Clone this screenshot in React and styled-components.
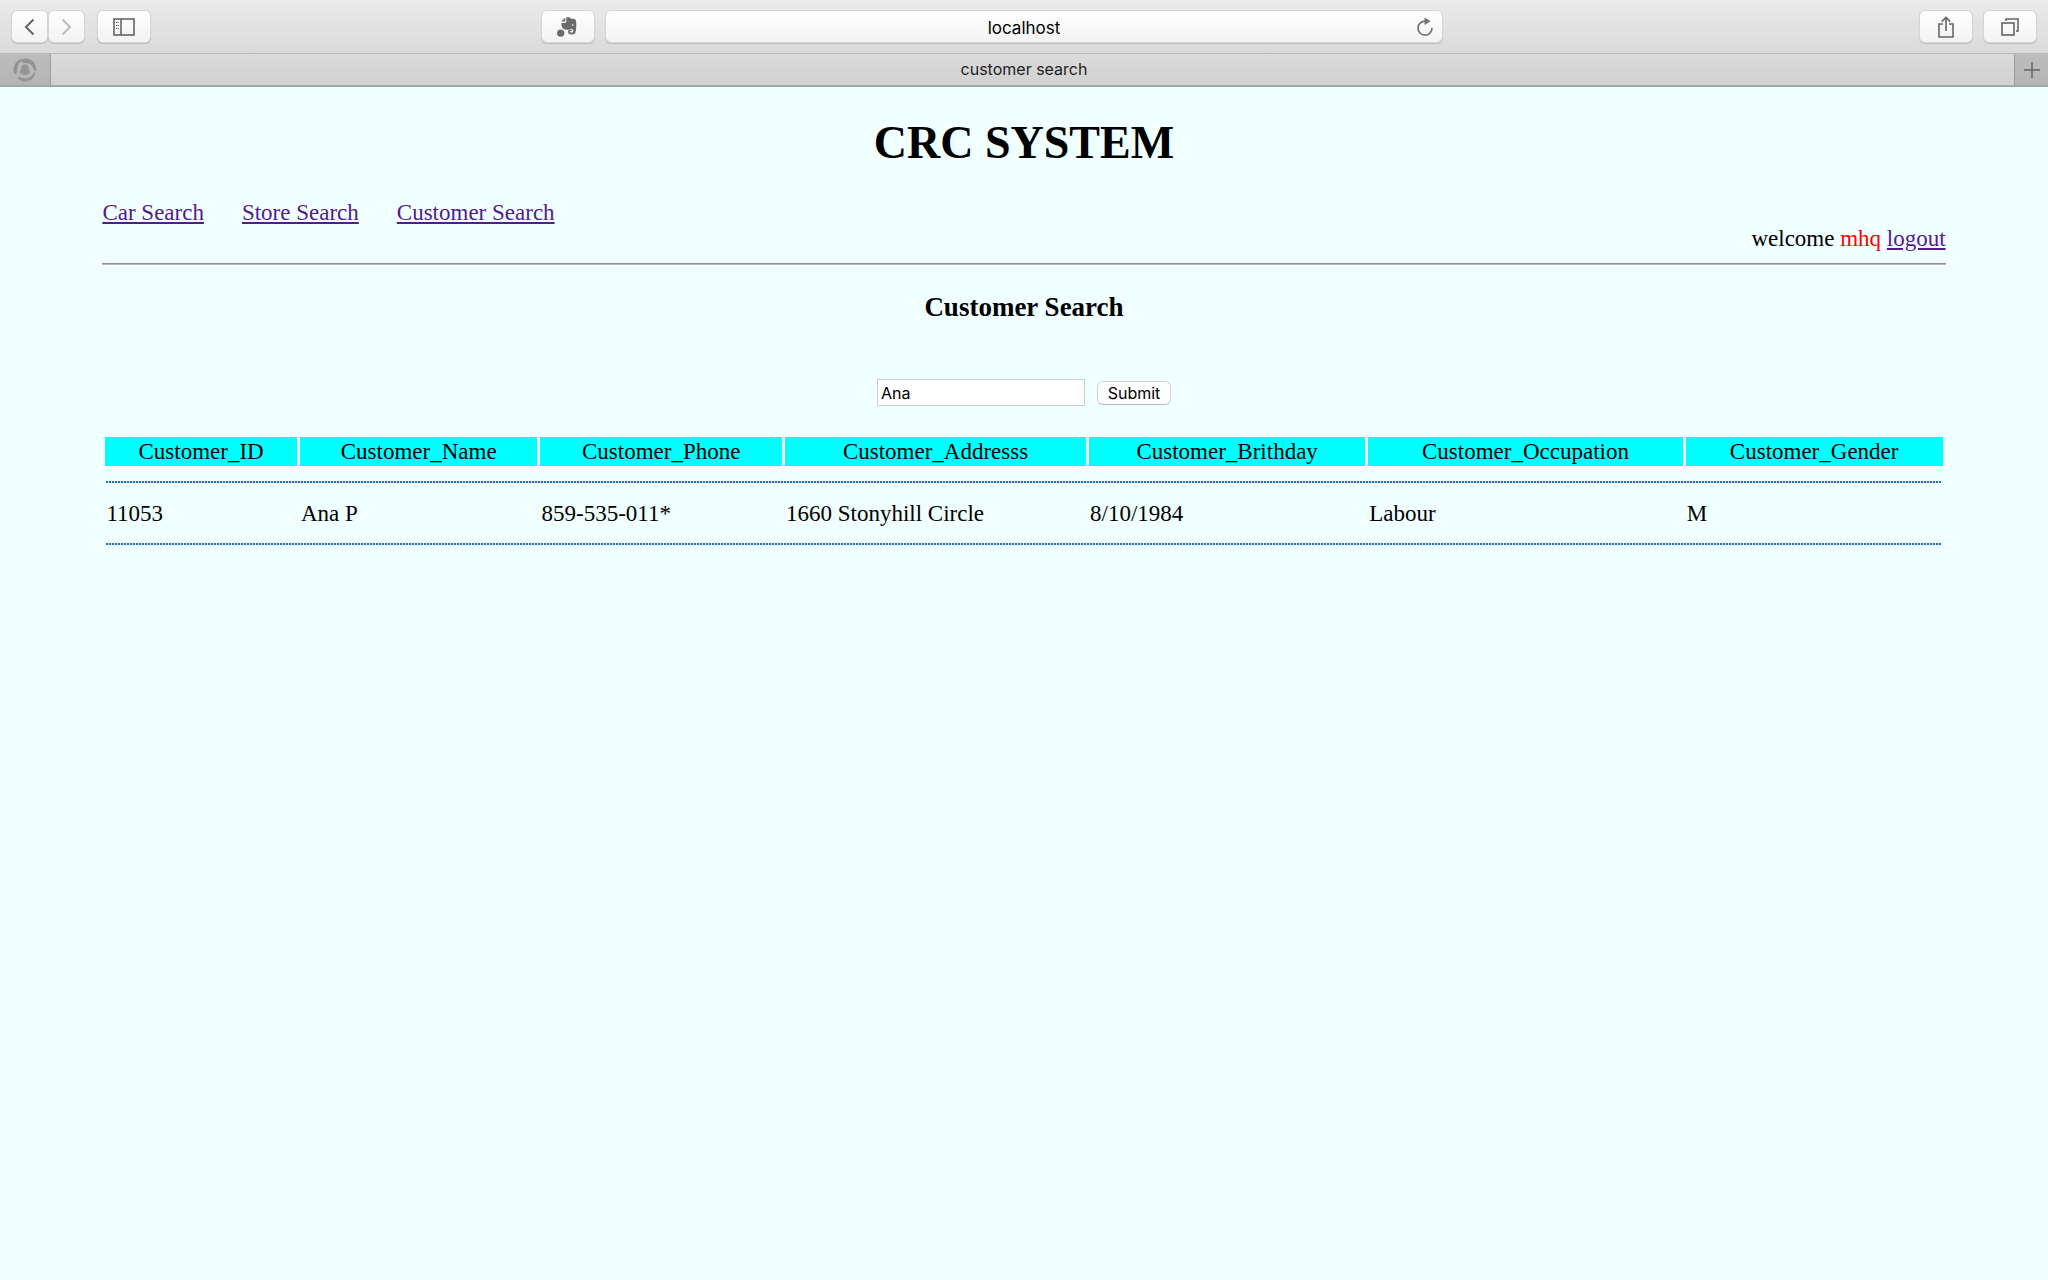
import React from 'react';
import styled, { createGlobalStyle } from 'styled-components';

const GlobalStyle = createGlobalStyle`
  * { box-sizing: border-box; }
  body {
    margin: 0;
    background: #f0ffff;
    color: #000;
    font: 23px/26px "Liberation Serif", serif;
  }
`;

const uiFont = 'Inter, sans-serif';

const Toolbar = styled.header`
  display: grid;
  grid-template-columns: minmax(0, 1fr) 41.3% minmax(0, 1fr);
  column-gap: 12px;
  align-items: center;
  height: 54px;
  padding: 0 12px;
  background: linear-gradient(#ebebeb, #dadada);
  border-bottom: 1px solid #b9b9b9;
`;

const Group = styled.div`
  display: flex;
  gap: ${(p) => p.$gap || 12}px;
  justify-content: ${(p) => p.$align || 'flex-start'};
`;

const ToolButton = styled.button`
  display: flex;
  align-items: center;
  justify-content: center;
  width: ${(p) => (p.$narrow ? 35 : 52)}px;
  height: 31px;
  padding: 0;
  border: 0;
  border-radius: 5px;
  background: linear-gradient(#fefefe, #f3f3f3);
  box-shadow: 0 0 0 1px #d6d6d6, 0 1px 1px 1px #bcbcbc;
  color: ${(p) => (p.$dim ? '#bdbdbd' : '#666')};
`;

const Spacer = styled.div`
  flex: 1;
`;

const AddressBar = styled.div`
  display: grid;
  grid-template-columns: 26px 1fr 26px;
  align-items: center;
  height: 31px;
  border-radius: 5px;
  background: linear-gradient(#fefefe, #f3f3f3);
  box-shadow: 0 0 0 1px #d6d6d6, 0 1px 1px 1px #bcbcbc;
`;

const AddressInput = styled.input`
  grid-column: 2;
  min-width: 0;
  padding: 2px 0 0;
  border: 0;
  background: none;
  color: #000;
  font: 17px/24px ${uiFont};
  text-align: center;
`;

const Reload = styled.button`
  display: flex;
  padding: 0;
  border: 0;
  background: none;
  color: #757575;
`;

const TabBar = styled.nav`
  display: flex;
  height: 33px;
  background: linear-gradient(#dadbda, #d0d2d1);
  border-bottom: 2px solid #a6a6a6;
`;

const EdgeTab = styled.button`
  display: flex;
  align-items: center;
  justify-content: center;
  width: ${(p) => p.$width}px;
  padding: 0;
  border: 0 solid #9c9c9c;
  border-width: ${(p) => (p.$end ? '0 0 0 1px' : '0 1px 0 0')};
  background: linear-gradient(#bcbdbc, #b3b5b4);
  color: #666;
`;

const ActiveTab = styled.button`
  flex: 1;
  padding: 0 17px 2px 0;
  border: 0;
  background: none;
  color: #222;
  font: 16px/24px ${uiFont};
`;

const Page = styled.main`
  padding: 0 5%;
`;

const Title = styled.h1`
  margin: 30px 0 31px;
  font-size: 46px;
  line-height: 52px;
  text-align: center;
`;

const Links = styled.nav`
  display: flex;
  gap: 38px;
`;

const Link = styled.a`
  color: #551a8b;
`;

const Welcome = styled.div`
  margin-bottom: 11px;
  text-align: right;
`;

const UserName = styled.span`
  color: #f00;
`;

const Rule = styled.hr`
  height: 2px;
  margin: 0;
  border: 0;
  background: linear-gradient(#909090 50%, #bfb4b4 50%);
`;

const Heading = styled.h3`
  margin: 27px 0;
  font-size: 27px;
  line-height: 31px;
  text-align: center;
`;

const SearchForm = styled.form`
  display: flex;
  align-items: center;
  justify-content: center;
  gap: 12px;
  margin: 56px 0 28px;
`;

const SearchInput = styled.input`
  width: 208px;
  height: 27px;
  padding: 0 3px;
  border: 1px solid #c9cfcf;
  border-radius: 0;
  background: #fff;
  font: 16px/24px ${uiFont};
`;

const Submit = styled.button`
  width: 74px;
  height: 24px;
  padding: 0;
  border: 1px solid #cdd4d4;
  border-bottom-color: #b4baba;
  border-radius: 6px;
  background: #fff;
  color: #000;
  font: 16px/22px ${uiFont};
`;

const Table = styled.table`
  width: 100%;
  border-spacing: 3px;
  line-height: 27px;
`;

const Th = styled.th`
  padding: 1px;
  background: #0ff;
  font-weight: normal;
`;

const Td = styled.td`
  padding: 1px;
`;

const Dots = styled.hr`
  height: 2px;
  margin: 11px 0 12px;
  border: 0;
  background: repeating-linear-gradient(90deg, #2f6cb0 0 2px, #cfe6f2 2px 3px);
`;

const columns = [
  'Customer_ID',
  'Customer_Name',
  'Customer_Phone',
  'Customer_Addresss',
  'Customer_Brithday',
  'Customer_Occupation',
  'Customer_Gender',
];

const customers = [
  ['11053', 'Ana P', '859-535-011*', '1660 Stonyhill Circle', '8/10/1984', 'Labour', 'M'],
];

const Icon = ({ w, h, children, stroke = 2 }) => (
  <svg width={w} height={h} viewBox={`0 0 ${w} ${h}`} fill="none" stroke="currentColor" strokeWidth={stroke} aria-hidden="true">
    {children}
  </svg>
);

const DottedRow = () => (
  <tr>
    <Td colSpan={columns.length}>
      <Dots />
    </Td>
  </tr>
);

function BrowserBar() {
  return (
    <>
      <Toolbar>
        <Group $gap={14}>
          <Group $gap={2}>
            <ToolButton $narrow aria-label="Back">
              <Icon w={14} h={18}><path d="M10.5 1.5 3 9l7.5 7.5" /></Icon>
            </ToolButton>
            <ToolButton $narrow $dim aria-label="Forward">
              <Icon w={12} h={18}><path d="M1.5 1.5 9 9l-7.500 7.500" /></Icon>
            </ToolButton>
          </Group>
          <ToolButton aria-label="Sidebar">
            <Icon w={22} h={18} stroke={1.6}>
              <rect x="1" y="1" width="20" height="16" />
              <path d="M8 1v16" />
              <path d="M3 4.500h3M3 7.500h3M3 10.500h3" strokeWidth="1.200" strokeDasharray="1.200 .6" />
            </Icon>
          </ToolButton>
          <Spacer />
          <ToolButton aria-label="Web clipper">
            <svg width="22" height="20" viewBox="0 0 22 20" fill="#6b6b6b" aria-hidden="true">
              <path d="M4.200 4.500 8.300.6v3.200q0 .7-.7.7z" />
              <path fillRule="evenodd" d="M9.300.3h2.400c1 0 1.400.5 1.800 1.100l3.700.5c1.200.2 1.600.9 1.800 2.100.5 3.600.4 8.200-.5 11.500-.4 1.400-1.800 2-4.200 2-2.200 0-3.200-1.100-3.200-2.800 0-1.400.9-2.300 2.200-2.300h1.300v1.700h-1.100c-1 0-.9 1.500.2 1.500h1.200c1 0 1.400-.6 1.400-1.600 0-1.500-1-2.200-2.700-2.300-.7 0-.8.9-1.900 1-3.900.3-6.300-.4-6.900-3.200-.3-1.300-.5-2.400-.5-3.500h3.600c.9 0 1.400-.5 1.400-1.400zM14.700 8.600h1.900c0-1.900-1.700-1.900-1.900 0z" />
              <circle cx="3.700" cy="16.200" r="3.600" />
            </svg>
          </ToolButton>
        </Group>
        <AddressBar>
          <AddressInput aria-label="Address" defaultValue="localhost" />
          <Reload aria-label="Reload">
            <Icon w={18} h={20} stroke={1.7}>
              <path d="M9.5 4.2A7 7 0 1 0 16 11" />
              <path d="M8.5.5v7.4l6.2-3.7z" fill="currentColor" stroke="none" />
            </Icon>
          </Reload>
        </AddressBar>
        <Group $align="flex-end">
          <ToolButton aria-label="Share">
            <Icon w={16} h={22} stroke={1.6}>
              <path d="M5 8H1v13h14V8h-4M8 15V1.5M3.8 5.6 8 1.4l4.2 4.2" />
            </Icon>
          </ToolButton>
          <ToolButton aria-label="Show all tabs">
            <Icon w={18} h={18} stroke={1.6}>
              <rect x="1" y="5" width="12" height="12" />
              <path d="M5 3V1h12v12h-2" />
            </Icon>
          </ToolButton>
        </Group>
      </Toolbar>
      <TabBar>
        <EdgeTab $width={51} aria-label="Pinned tab">
          <svg width="24" height="24" viewBox="0 0 24 24" fill="#939594" aria-hidden="true">
            <path d="M9 .8C4 2 .5 6.500.5 12c0 2.600.8 3.900 2 4.300C5 16.500 3.500 11 5 7.500 5.900 5 7.800 3.500 11 2.800z" />
            <path d="M9.500 1C13 0 18 .5 21 4.500c2 3 2.500 6 2.200 8.500C21 14 20.500 10 18.500 7.500 16.500 5 13 5 9.500 5z" />
            <path d="M22.500 14.500C21.500 19.500 17.500 23.500 12 23.500c-3 0-6-1.500-7.500-3.500 1-2.500 4.500.5 8 .5 4 0 6.500-2 8-5.500z" />
            <path d="M12 6.500c-2.600 0-3.700 1.700-3.700 3.600 0 1.600-1.800 2.800-1.400 4.600.3.900 1.500.1 1.900.8.600 1 1.700 1.500 3.200 1.500s2.600-.5 3.200-1.500c.4-.7 1.600.1 1.900-.8.400-1.800-1.400-3-1.400-4.600 0-1.900-1.100-3.600-3.700-3.600z" />
          </svg>
        </EdgeTab>
        <ActiveTab>customer search</ActiveTab>
        <EdgeTab $end $width={34} aria-label="New tab">
          <Icon w={16} h={16} stroke={1.5}><path d="M8 0v16M0 8h16" /></Icon>
        </EdgeTab>
      </TabBar>
    </>
  );
}

export default function App() {
  return (
    <>
      <GlobalStyle />
      <BrowserBar />
      <Page>
        <Title>CRC SYSTEM</Title>
        <Links>
          <Link href="#cars">Car Search</Link>
          <Link href="#stores">Store Search</Link>
          <Link href="#customers">Customer Search</Link>
        </Links>
        <Welcome>
          welcome <UserName>mhq</UserName> <Link href="#logout">logout</Link>
        </Welcome>
        <Rule />
        <Heading>Customer Search</Heading>
        <SearchForm onSubmit={(e) => e.preventDefault()}>
          <SearchInput aria-label="Customer name" defaultValue="Ana" />
          <Submit type="submit">Submit</Submit>
        </SearchForm>
        <Table>
          <thead>
            <tr>
              {columns.map((name) => (
                <Th key={name} scope="col">{name}</Th>
              ))}
            </tr>
          </thead>
          <tbody>
            <DottedRow />
            {customers.map((row) => (
              <React.Fragment key={row[0]}>
                <tr>
                  {row.map((value, i) => (
                    <Td key={columns[i]}>{value}</Td>
                  ))}
                </tr>
                <DottedRow />
              </React.Fragment>
            ))}
          </tbody>
        </Table>
      </Page>
    </>
  );
}
